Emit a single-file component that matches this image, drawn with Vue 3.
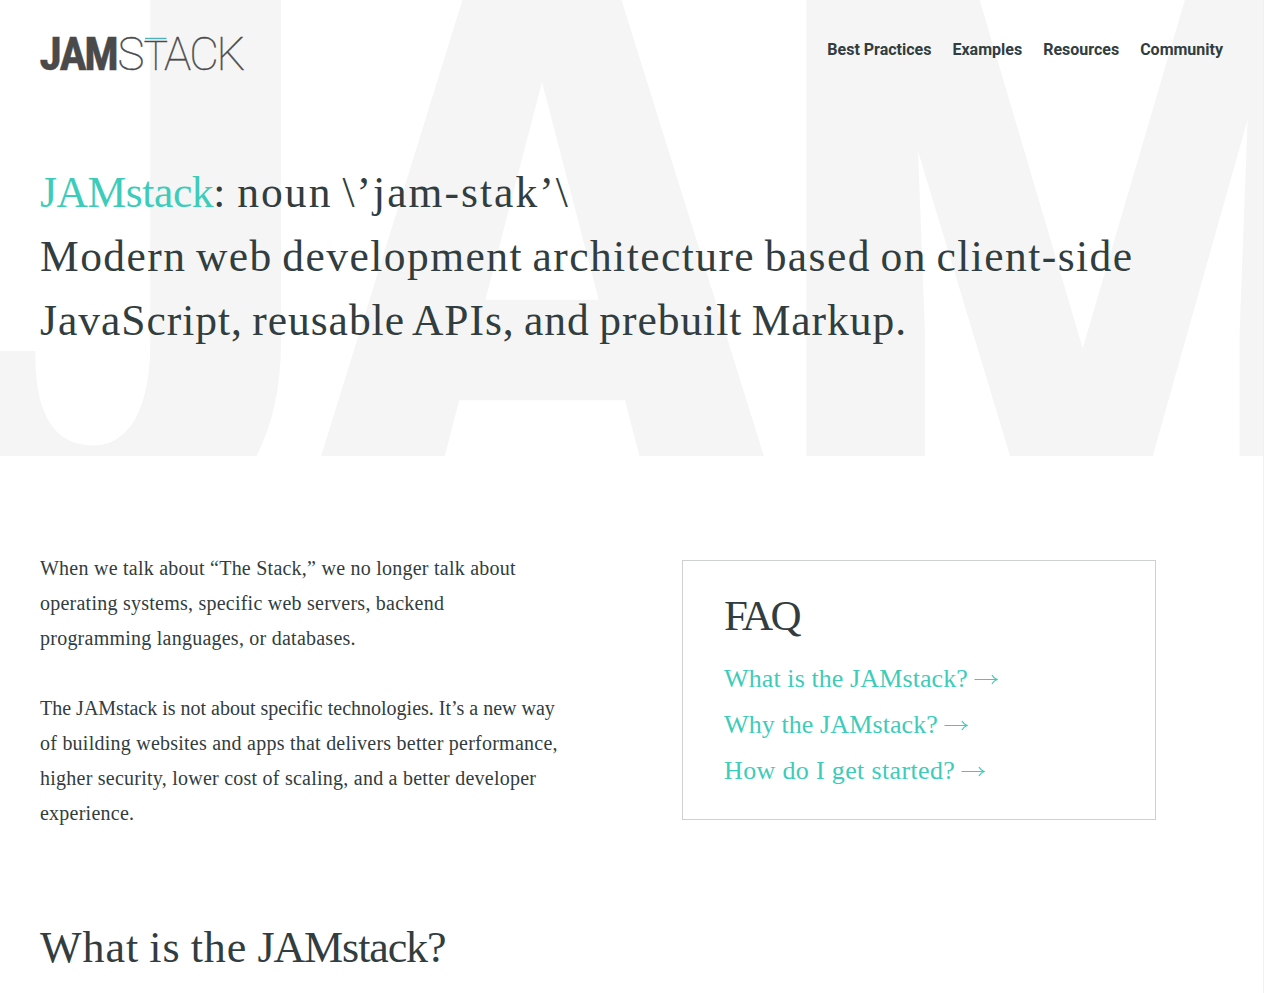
<template>
  <div class="page">
    <header class="hero">
      <svg class="hero__backdrop" width="1263" height="456" viewBox="0 0 1263 456" aria-hidden="true">
        <text transform="translate(-117 547) scale(1.11 1.13)">J</text>
        <text transform="translate(290.5 525) scale(1.02 1.03)">A</text>
        <text transform="translate(757 543) scale(1.04 1.05)">M</text>
      </svg>
      <div class="topbar">
        <a class="logo" href="#">
          <svg width="206" height="36" viewBox="0 0 206 36">
            <text class="logo__jam" x="-0.5 19.4 44.2" y="33.3">JAM</text>
            <text class="logo__stack" x="77.4 103.6 124 149.2 176.5" y="33.3">S<tspan class="logo__t">T</tspan>ACK</text>
            <path class="logo__bar" d="M105 1.5H126.5" />
          </svg>
        </a>
        <nav class="nav">
          <a v-for="item in nav" :key="item" class="nav__link" href="#">{{ item }}</a>
        </nav>
      </div>
      <h1 class="headline">
        <span class="headline__line headline__line--first"><em>JAMstack</em>: noun \’jam-stak’\</span>
        <span class="headline__line headline__line--second">Modern web development architecture based on client-side</span>
        <span class="headline__line headline__line--third">JavaScript, reusable APIs, and prebuilt Markup.</span>
      </h1>
    </header>

    <main class="content">
      <section class="intro">
        <div class="intro__text">
          <p>
            When we talk about “The Stack,” we no longer talk about<br>
            operating systems, specific web servers, backend<br>
            programming languages, or databases.
          </p>
          <p>
            <span class="tight">The JAMstack is not about specific technologies. It’s a new way</span><br>
            of building websites and apps that delivers better performance,<br>
            higher security, lower cost of scaling, and a better developer<br>
            experience.
          </p>
        </div>
        <aside class="faq">
          <h2 class="faq__title">FAQ</h2>
          <a v-for="question in questions" :key="question" class="faq__link" href="#">
            <span>{{ question }}</span>
            <svg width="24" height="12" viewBox="0 0 24 12" fill="none" stroke="currentColor">
              <path d="M0.5 6.5H22.5M18 2C19 4 20.5 5.5 23 6.5C20.5 7.5 19 9 18 11" stroke-width="1.2" />
            </svg>
          </a>
        </aside>
      </section>
      <h2 class="section-title">What is the <span>JAMstack?</span></h2>
    </main>
  </div>
</template>

<script setup>
const nav = ['Best Practices', 'Examples', 'Resources', 'Community'];

const questions = [
  'What is the JAMstack?',
  'Why the JAMstack?',
  'How do I get started?',
];
</script>

<style>
body {
  background: #fff;
}
</style>

<style scoped>
.page {
  box-sizing: border-box;
  height: 993px;
  overflow: hidden;
  border-right: 1px solid #f1f1f1;
  font-family: 'Liberation Serif', serif;
  color: #313d3e;
}

a {
  color: inherit;
  text-decoration: none;
}

.hero {
  position: relative;
  box-sizing: border-box;
  height: 456px;
  padding: 37px 40px 0;
}

.hero__backdrop {
  position: absolute;
  top: 0;
  left: 0;
  font-family: Roboto, sans-serif;
  font-size: 826px;
  font-weight: 700;
  font-stretch: 75%;
  fill: #f5f5f5;
}

.topbar {
  position: relative;
  display: flex;
  justify-content: space-between;
  height: 36px;
}

.logo svg {
  display: block;
  overflow: visible;
  font-family: Roboto, sans-serif;
  font-size: 45.5px;
  fill: #4a4a4a;
}

.logo__jam {
  font-weight: 700;
  font-stretch: 75%;
  stroke: #4a4a4a;
  stroke-width: 0.4px;
}

.logo__stack {
  font-weight: 100;
  stroke: #4a4a4a;
  stroke-width: 0.4px;
}

.logo__t {
  font-size: 41px;
}

.logo__bar {
  stroke: #4db1bb;
  stroke-width: 1.4px;
}

.nav {
  display: flex;
  gap: 21px;
  font-family: Roboto, sans-serif;
  font-size: 16px;
  font-weight: 700;
  line-height: 25px;
}

.headline {
  position: relative;
  margin: 87px 0 0;
  font-size: 43.5px;
  font-weight: 400;
  line-height: 64px;
}

.headline em {
  font-style: normal;
  letter-spacing: -0.4px;
  color: #3dccba;
}

.headline__line {
  display: block;
  white-space: nowrap;
}

.headline__line--first {
  letter-spacing: 2.05px;
  word-spacing: -3px;
}

.headline__line--second {
  letter-spacing: 1.45px;
  word-spacing: -2.8px;
}

.headline__line--third {
  letter-spacing: 0.98px;
  word-spacing: -2.5px;
}

.content {
  padding: 95px 40px 0;
}

.intro {
  display: flex;
  align-items: flex-start;
}

.intro__text {
  width: 642px;
  font-size: 20px;
  line-height: 35px;
  letter-spacing: 0.24px;
  white-space: nowrap;
}

.intro__text p {
  margin: 0 0 35px;
}

.tight {
  letter-spacing: 0;
}

.faq {
  box-sizing: border-box;
  width: 474px;
  height: 260px;
  margin-top: 9px;
  padding: 23px 41px;
  border: 1px solid #cfd1d1;
}

.faq__title {
  margin: 0 0 8px;
  font-size: 43px;
  font-weight: 400;
  line-height: 64px;
  letter-spacing: -2.6px;
}

.faq__link {
  display: flex;
  align-items: center;
  gap: 6px;
  height: 46px;
  font-size: 26px;
  letter-spacing: 0.1px;
  color: #3dccba;
}

.faq__link:last-child {
  letter-spacing: 0.35px;
}

.section-title {
  margin: 50px 0 0;
  font-size: 44px;
  font-weight: 400;
  line-height: 64px;
  letter-spacing: 1px;
  word-spacing: -2px;
}

.section-title span {
  letter-spacing: -1.1px;
}
</style>
